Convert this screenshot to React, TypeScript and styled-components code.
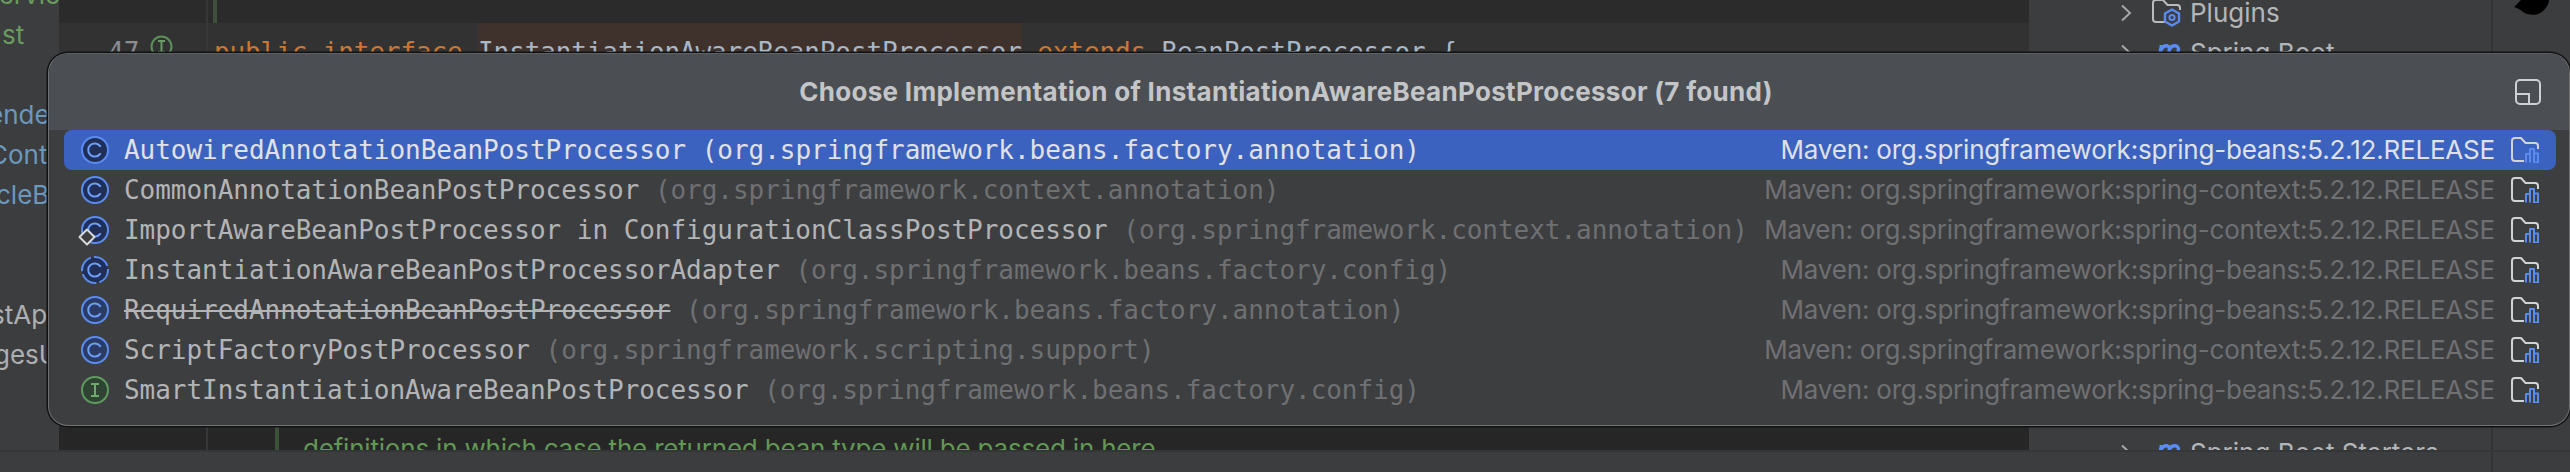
import styled, { createGlobalStyle } from 'styled-components';

const GlobalStyle = createGlobalStyle`
  html, body {
    margin: 0;
    padding: 0;
    width: 2570px;
    height: 472px;
    overflow: hidden;
    background: #3c3d3f;
  }
`;

const MONO = `'DejaVu Sans Mono', 'Liberation Mono', monospace`;
const SANS = `Inter, 'Noto Sans', sans-serif`;

const Page = styled.div`
  position: relative;
  width: 2570px;
  height: 472px;
  display: flex;
  flex-direction: column;
  overflow: hidden;
`;

const Main = styled.div`
  display: flex;
  height: 450px;
  overflow: hidden;
`;

const Sidebar = styled.div`
  width: 59px;
  flex: none;
  margin-top: -25px;
  background: #3c3d3f;
  overflow: hidden;
`;

const SideItem = styled.div<{ $tone: 'green' | 'blue' | 'grey'; $indent: number }>`
  height: 40px;
  margin-left: ${({ $indent }) => $indent}px;
  white-space: nowrap;
  font: 26px/40px ${SANS};
  color: ${({ $tone }) =>
    $tone === 'green' ? '#6a9b5e' : $tone === 'blue' ? '#6b98bd' : '#adafb1'};
`;

const Editor = styled.div`
  flex: 1;
  display: flex;
  flex-direction: column;
  background: #2b2b2b;
  min-width: 0;
  overflow: hidden;
`;

const EditorLine = styled.div<{ $h: number; $bg: string }>`
  display: flex;
  flex: none;
  height: ${({ $h }) => $h}px;
  background: ${({ $bg }) => $bg};
  overflow: hidden;
`;

const Filler = styled.div`
  flex: 1;
`;

const Gutter = styled.div`
  width: 149px;
  flex: none;
  display: flex;
  align-items: flex-start;
  border-right: 2px solid #363738;
  box-sizing: border-box;
`;

const LineNumber = styled.span`
  margin: 9px 0 0 49px;
  width: 41px;
  font: 26px/40px ${MONO};
  color: #8b8d90;
`;

const GutterIcon = styled.svg`
  margin: 12px 0 0 1px;
  flex: none;
`;

const Caret = styled.span`
  width: 2px;
  height: 10px;
  margin: 44px 0 0 0;
  background: #c8c8c8;
`;

const Guide = styled.span<{ $left: number }>`
  width: 4px;
  flex: none;
  margin-left: ${({ $left }) => $left}px;
  background: #3e4f3b;
`;

const Code = styled.div`
  margin: 9px 0 0 6px;
  font: 26px/40px ${MONO};
  letter-spacing: -0.12px;
  white-space: pre;
  color: #a9b7c6;
`;

const Keyword = styled.span`
  color: #cc7832;
`;

const Marked = styled.span`
  background: #3f322d;
  padding: 20px 0;
`;

const DocText = styled.div`
  margin: 4px 0 0 24px;
  font: 26px/40px ${SANS};
  letter-spacing: -0.2px;
  white-space: nowrap;
  color: #629755;
`;

const ProjectPanel = styled.div`
  width: 462px;
  flex: none;
  display: flex;
  flex-direction: column;
  margin-top: -7px;
  padding-left: 91px;
  box-sizing: border-box;
  background: #3c3d3f;
`;

const TreeRow = styled.div`
  height: 40px;
  flex: none;
  display: flex;
  align-items: center;
  gap: 8px;
  font: 26px/40px ${SANS};
  color: #b4b6b8;
  white-space: nowrap;
`;

const TreeSpacer = styled.div`
  height: 360px;
  flex: none;
`;

const Strip = styled.div`
  width: 79px;
  flex: none;
  box-sizing: border-box;
  padding-left: 21px;
  background: #3c3d3f;
  border-left: 2px solid #333436;
`;

const BottomBar = styled.div`
  height: 22px;
  display: flex;
  justify-content: flex-end;
  background: #3c3d3f;
  border-top: 2px solid #353638;
  box-sizing: border-box;
`;

const BarEnd = styled.div`
  width: 79px;
  border-left: 2px solid #333436;
  box-sizing: border-box;
`;

const Popup = styled.div`
  position: absolute;
  left: 48px;
  top: 53px;
  right: 0;
  height: 373px;
  box-sizing: border-box;
  background: #3d3e40;
  border-radius: 20px;
  border: 1px solid #707173;
  border-top-color: #5e6064;
  box-shadow: 0 0 0 1.5px #111213;
  overflow: hidden;
`;

const PopupHeader = styled.div`
  position: relative;
  height: 76px;
  display: flex;
  align-items: center;
  justify-content: center;
  padding-right: 46px;
  background: #4b4e52;
  font: 700 26px/1 ${SANS};
  letter-spacing: 0.3px;
  color: #c4c5c7;
`;

const RestoreButton = styled.svg`
  position: absolute;
  right: 28px;
  top: 25px;
`;

const RowList = styled.div`
  display: flex;
  flex-direction: column;
  padding: 0 13px 0 15px;
`;

const Row = styled.div<{ $selected?: boolean }>`
  height: 40px;
  display: flex;
  align-items: center;
  padding: 0 17px 0 17px;
  border-radius: 8px;
  background: ${({ $selected }) => ($selected ? '#3c62c0' : 'transparent')};
`;

const IconBox = styled.span`
  position: relative;
  flex: none;
  width: 28px;
  height: 28px;
  margin-right: 15px;
`;

const Badge = styled.svg`
  position: absolute;
  left: -3px;
  top: 12px;
`;

const Label = styled.div`
  flex: 1;
  min-width: 0;
  font: 26px/40px ${MONO};
  letter-spacing: -0.04px;
  white-space: pre;
`;

const ClassName = styled.span<{ $selected?: boolean; $struck?: boolean }>`
  color: ${({ $selected }) => ($selected ? '#e0e1e4' : '#b3b4b6')};
  text-decoration: ${({ $struck }) => ($struck ? 'line-through' : 'none')};
`;

const PackageName = styled.span<{ $selected?: boolean }>`
  color: ${({ $selected }) => ($selected ? '#e0e1e4' : '#6f7072')};
`;

const Library = styled.span<{ $selected?: boolean }>`
  flex: none;
  margin-right: 16px;
  font: 26px/40px ${SANS};
  letter-spacing: -0.2px;
  white-space: nowrap;
  color: ${({ $selected }) => ($selected ? '#dfe1e6' : '#6f7072')};
`;

type Kind = 'class' | 'abstract' | 'interface';

const TypeIcon = ({ kind, dark }: { kind: Kind; dark?: boolean }) => {
  if (kind === 'interface') {
    return (
      <svg width="28" height="28" viewBox="0 0 28 28" fill="none">
        <circle cx="14" cy="14" r="13" fill="#2f4332" stroke="#5f9a5e" strokeWidth="2" />
        <path d="M10 8h8M10 20h8M14 8v12" stroke="#6fa96d" strokeWidth="2" />
      </svg>
    );
  }
  return (
    <svg width="28" height="28" viewBox="0 0 28 28" fill="none">
      <circle
        cx="14"
        cy="14"
        r="13"
        fill={dark ? '#202f57' : '#2a3b66'}
        stroke="#5a8bf0"
        strokeWidth="2"
        strokeDasharray={kind === 'abstract' ? '17.4 3' : undefined}
        strokeDashoffset={kind === 'abstract' ? 1.5 : undefined}
      />
      <path
        d="M19.2 10.2a6.6 6.6 0 1 0 0 7.6"
        stroke="#6f9cf5"
        strokeWidth="2"
        strokeLinecap="round"
      />
    </svg>
  );
};

const LibraryFolder = () => (
  <svg width="28" height="26" viewBox="0 0 28 26" fill="none">
    <path
      d="M13 24H4a3 3 0 0 1-3-3V4a3 3 0 0 1 3-3h6l4.500 5H24a3 3 0 0 1 3 3v3"
      stroke="#d2d3d6"
      strokeWidth="2"
    />
    <path
      d="M15 25.500V17h4v8.500M19 25.500V12h4v13.500M23 25.500V16.500h4v9z"
      stroke="#5a8bf0"
      strokeWidth="2"
      strokeLinejoin="round"
    />
  </svg>
);

const PluginFolder = () => (
  <svg width="30" height="28" viewBox="0 0 30 28" fill="none">
    <path
      d="M13 23H4a3 3 0 0 1-3-3V4a3 3 0 0 1 3-3h7l4.500 5H25a3 3 0 0 1 3 3v2"
      stroke="#b9bbbd"
      strokeWidth="2"
    />
    <path
      d="M20 10.500l7 4v8l-7 4-7-4v-8z"
      stroke="#5a8bf0"
      strokeWidth="2.400"
      strokeLinejoin="round"
      fill="#3c3d3f"
    />
    <circle cx="20" cy="18.500" r="2.600" stroke="#5a8bf0" strokeWidth="2" />
  </svg>
);

const MavenIcon = () => (
  <svg width="30" height="26" viewBox="0 0 30 26" fill="none">
    <path
      d="M1 25L4.500 7M4 12c2-5 8-6 8.500-1L10 25M12 12c2-5 9-6 9.500-1L19 25"
      stroke="#5a8bf0"
      strokeWidth="3.400"
      transform="translate(5 -2)"
    />
  </svg>
);

const Chevron = () => (
  <svg width="12" height="18" viewBox="0 0 12 18" fill="none" style={{ marginRight: 12 }}>
    <path d="M2 1.500l8 7.500-8 7.500" stroke="#a4a6a8" strokeWidth="2" />
  </svg>
);

const rows: {
  name: string;
  pkg: string;
  lib: string;
  kind: Kind;
  dark?: boolean;
  struck?: boolean;
  badge?: boolean;
}[] = [
  {
    name: 'AutowiredAnnotationBeanPostProcessor',
    pkg: '(org.springframework.beans.factory.annotation)',
    lib: 'Maven: org.springframework:spring-beans:5.2.12.RELEASE',
    kind: 'class',
    dark: true,
  },
  {
    name: 'CommonAnnotationBeanPostProcessor',
    pkg: '(org.springframework.context.annotation)',
    lib: 'Maven: org.springframework:spring-context:5.2.12.RELEASE',
    kind: 'class',
    dark: true,
  },
  {
    name: 'ImportAwareBeanPostProcessor in ConfigurationClassPostProcessor',
    pkg: '(org.springframework.context.annotation)',
    lib: 'Maven: org.springframework:spring-context:5.2.12.RELEASE',
    kind: 'class',
    dark: true,
    badge: true,
  },
  {
    name: 'InstantiationAwareBeanPostProcessorAdapter',
    pkg: '(org.springframework.beans.factory.config)',
    lib: 'Maven: org.springframework:spring-beans:5.2.12.RELEASE',
    kind: 'abstract',
    dark: true,
  },
  {
    name: 'RequiredAnnotationBeanPostProcessor',
    pkg: '(org.springframework.beans.factory.annotation)',
    lib: 'Maven: org.springframework:spring-beans:5.2.12.RELEASE',
    kind: 'class',
    struck: true,
  },
  {
    name: 'ScriptFactoryPostProcessor',
    pkg: '(org.springframework.scripting.support)',
    lib: 'Maven: org.springframework:spring-context:5.2.12.RELEASE',
    kind: 'class',
  },
  {
    name: 'SmartInstantiationAwareBeanPostProcessor',
    pkg: '(org.springframework.beans.factory.config)',
    lib: 'Maven: org.springframework:spring-beans:5.2.12.RELEASE',
    kind: 'interface',
  },
];

export default function App() {
  return (
    <Page>
      <GlobalStyle />
      <Main>
        <Sidebar>
          <SideItem $tone="green" $indent={-18}>Service</SideItem>
          <SideItem $tone="green" $indent={2}>st</SideItem>
          <SideItem $tone="blue" $indent={0} />
          <SideItem $tone="blue" $indent={-12}>ender</SideItem>
          <SideItem $tone="blue" $indent={-11}>Cont</SideItem>
          <SideItem $tone="blue" $indent={-4}>cleBean</SideItem>
          <SideItem $tone="blue" $indent={0} />
          <SideItem $tone="blue" $indent={0} />
          <SideItem $tone="grey" $indent={-9}>stApi</SideItem>
          <SideItem $tone="grey" $indent={-6}>gesUtil</SideItem>
        </Sidebar>
        <Editor>
          <EditorLine $h={23} $bg="#2b2b2b">
            <Gutter />
            <Guide $left={5} />
          </EditorLine>
          <EditorLine $h={45} $bg="#323232">
            <Gutter>
              <LineNumber>47</LineNumber>
              <GutterIcon width="23" height="23" viewBox="0 0 23 23" fill="none">
                <circle cx="11.500" cy="11.500" r="10" stroke="#5c8f5a" strokeWidth="2" />
                <path d="M8 6h7M8 17h7M11.500 6v11" stroke="#6a9c66" strokeWidth="2" />
              </GutterIcon>
              <Caret />
            </Gutter>
            <Code>
              <Keyword>public interface </Keyword>
              <Marked>InstantiationAwareBeanPostProcessor</Marked>
              {' '}
              <Keyword>extends</Keyword> BeanPostProcessor {'{'}
            </Code>
          </EditorLine>
          <Filler />
          <EditorLine $h={25} $bg="#262626">
            <Gutter />
            <Guide $left={67} />
            <DocText>definitions in which case the returned bean type will be passed in here</DocText>
          </EditorLine>
        </Editor>
        <ProjectPanel>
          <TreeRow>
            <Chevron />
            <PluginFolder />
            Plugins
          </TreeRow>
          <TreeRow>
            <Chevron />
            <MavenIcon />
            Spring Boot
          </TreeRow>
          <TreeSpacer />
          <TreeRow>
            <Chevron />
            <MavenIcon />
            Spring Boot Starters
          </TreeRow>
        </ProjectPanel>
        <Strip>
          <svg width="36" height="16" viewBox="0 0 36 16" fill="#000">
            <path d="M7 0L0 7c4 1 7 3 9 5 5 4 16 4 21-2 3-3 5-7 5-10z" />
          </svg>
        </Strip>
      </Main>
      <BottomBar>
        <BarEnd />
      </BottomBar>
      <Popup>
        <PopupHeader>
          <span>Choose Implementation of InstantiationAwareBeanPostProcessor (7 found)</span>
          <RestoreButton width="26" height="26" viewBox="0 0 26 26" fill="none">
            <rect x="1" y="1" width="24" height="24" rx="4" stroke="#cfd0d3" strokeWidth="2" />
            <path d="M1 15h13v10" stroke="#cfd0d3" strokeWidth="2" />
          </RestoreButton>
        </PopupHeader>
        <RowList>
          {rows.map((row, i) => {
            const selected = i === 0;
            return (
              <Row key={row.name} $selected={selected}>
                <IconBox>
                  <TypeIcon kind={row.kind} dark={row.dark} />
                  {row.badge && (
                    <Badge width="18" height="18" viewBox="0 0 18 18">
                      <path
                        d="M9 1.500l7.500 7.500-7.500 7.500-7.500-7.500z"
                        fill="#3d3e40"
                        stroke="#d8d9db"
                        strokeWidth="2"
                        strokeLinejoin="round"
                      />
                    </Badge>
                  )}
                </IconBox>
                <Label>
                  <ClassName $selected={selected} $struck={row.struck}>{row.name}</ClassName>
                  {' '}
                  <PackageName $selected={selected}>{row.pkg}</PackageName>
                </Label>
                <Library $selected={selected}>{row.lib}</Library>
                <LibraryFolder />
              </Row>
            );
          })}
        </RowList>
      </Popup>
    </Page>
  );
}
